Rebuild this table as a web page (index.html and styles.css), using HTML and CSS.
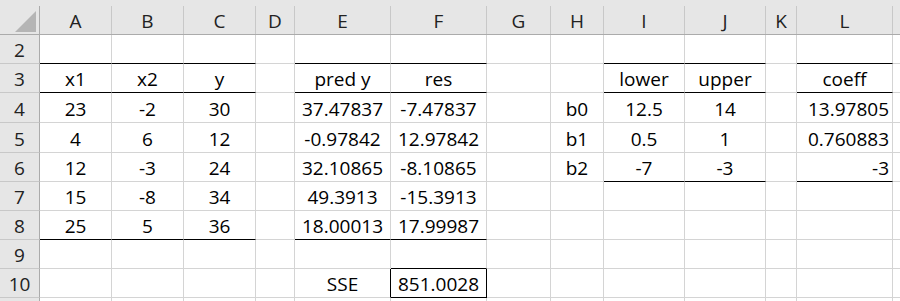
FILE: index.html
```html
<!DOCTYPE html>
<html>
<head>
<meta charset="utf-8">
<link rel="stylesheet" href="styles.css">
</head>
<body>
<div class="sheet">
  <div class="row hdr">
    <div class="corner"><svg class="tri" width="21" height="21" viewBox="0 0 21 21"><polygon points="21,0 21,21 0,21" fill="#b5b5b5"/></svg></div>
    <div class="ch">A</div><div class="ch">B</div><div class="ch">C</div><div class="ch">D</div><div class="ch">E</div><div class="ch">F</div><div class="ch">G</div><div class="ch">H</div><div class="ch">I</div><div class="ch">J</div><div class="ch">K</div><div class="ch">L</div><div class="ch last"></div>
  </div>
  <div class="row">
    <div class="rh">2</div>
    <div class="bb"></div><div class="bb"></div><div class="bb"></div><div></div><div class="bb"></div><div class="bb"></div><div></div><div></div><div class="bb"></div><div class="bb"></div><div></div><div class="bb"></div><div class="last"></div>
  </div>
  <div class="row">
    <div class="rh">3</div>
    <div class="bb">x1</div><div class="bb">x2</div><div class="bb">y</div><div></div><div class="bb">pred y</div><div class="bb">res</div><div></div><div></div><div class="bb">lower</div><div class="bb">upper</div><div></div><div class="bb">coeff</div><div class="last"></div>
  </div>
  <div class="row tall">
    <div class="rh">4</div>
    <div>23</div><div>-2</div><div>30</div><div></div><div>37.47837</div><div>-7.47837</div><div></div><div>b0</div><div>12.5</div><div>14</div><div></div><div class="r">13.97805</div><div class="last"></div>
  </div>
  <div class="row tall">
    <div class="rh">5</div>
    <div>4</div><div>6</div><div>12</div><div></div><div>-0.97842</div><div>12.97842</div><div></div><div>b1</div><div>0.5</div><div>1</div><div></div><div class="r">0.760883</div><div class="last"></div>
  </div>
  <div class="row">
    <div class="rh">6</div>
    <div>12</div><div>-3</div><div>24</div><div></div><div>32.10865</div><div>-8.10865</div><div></div><div>b2</div><div class="bb">-7</div><div class="bb">-3</div><div></div><div class="r bb">-3</div><div class="last"></div>
  </div>
  <div class="row">
    <div class="rh">7</div>
    <div>15</div><div>-8</div><div>34</div><div></div><div>49.3913</div><div>-15.3913</div><div></div><div></div><div></div><div></div><div></div><div></div><div class="last"></div>
  </div>
  <div class="row">
    <div class="rh">8</div>
    <div class="bb">25</div><div class="bb">5</div><div class="bb">36</div><div></div><div class="bb">18.00013</div><div class="bb">17.99987</div><div></div><div></div><div></div><div></div><div></div><div></div><div class="last"></div>
  </div>
  <div class="row">
    <div class="rh">9</div>
    <div></div><div></div><div></div><div></div><div></div><div class="bb"></div><div></div><div></div><div></div><div></div><div></div><div></div><div class="last"></div>
  </div>
  <div class="row">
    <div class="rh">10</div>
    <div></div><div></div><div></div><div></div><div class="br">SSE</div><div class="br bb">851.0028</div><div></div><div></div><div></div><div></div><div></div><div></div><div class="last"></div>
  </div>
  <div class="row stub">
    <div class="rh"></div>
    <div></div><div></div><div></div><div></div><div></div><div></div><div></div><div></div><div></div><div></div><div></div><div></div><div class="last"></div>
  </div>
</div>
</body>
</html>
```

FILE: styles.css
```css
* { box-sizing: border-box; }
html, body { margin: 0; padding: 0; background: #fff; }
body {
  font-family: "Open Sans", "Noto Sans", sans-serif;
  font-size: 19px;
  color: #000;
  width: 900px;
  height: 301px;
  overflow: hidden;
}
.sheet { display: flex; flex-direction: column; }
.row {
  display: grid;
  grid-template-columns: 40px 72px 72px 72px 39px 96px 96px 64px 53px 81px 81px 31px 96px 1fr;
  height: 29px;
  flex: none;
}
.row.tall { height: 30px; }
.row.stub { height: 3px; }
.row.stub > div { border-bottom: none; }
.row > div {
  border-right: 1px solid #d4d4d4;
  border-bottom: 1px solid #d4d4d4;
  display: flex;
  align-items: flex-end;
  justify-content: center;
  white-space: nowrap;
  overflow: hidden;
  line-height: 26px;
}
.row > div.last { border-right: none; }
.row > div.bb { border-bottom-color: #000; }
.row > div.br { border-right-color: #000; }
.row > div.r { justify-content: flex-end; padding-right: 3px; }

.hdr {
  height: 35px;
  padding-top: 6px;
  background: #e6e6e6;
  border-bottom: 1px solid #ababab;
}
.hdr > div {
  border-bottom: none;
  border-right-color: #c8c8c8;
  color: #222;
  align-items: flex-start;
  padding-top: 2px;
}
.hdr > div.corner {
  border-right-color: #ababab;
  align-items: flex-end;
  justify-content: flex-end;
  padding: 0 3px 2px 0;
}
.tri { display: block; }
.row > div.rh {
  background: #e6e6e6;
  border-right-color: #ababab;
  border-bottom-color: #c8c8c8;
  color: #222;
}
```
